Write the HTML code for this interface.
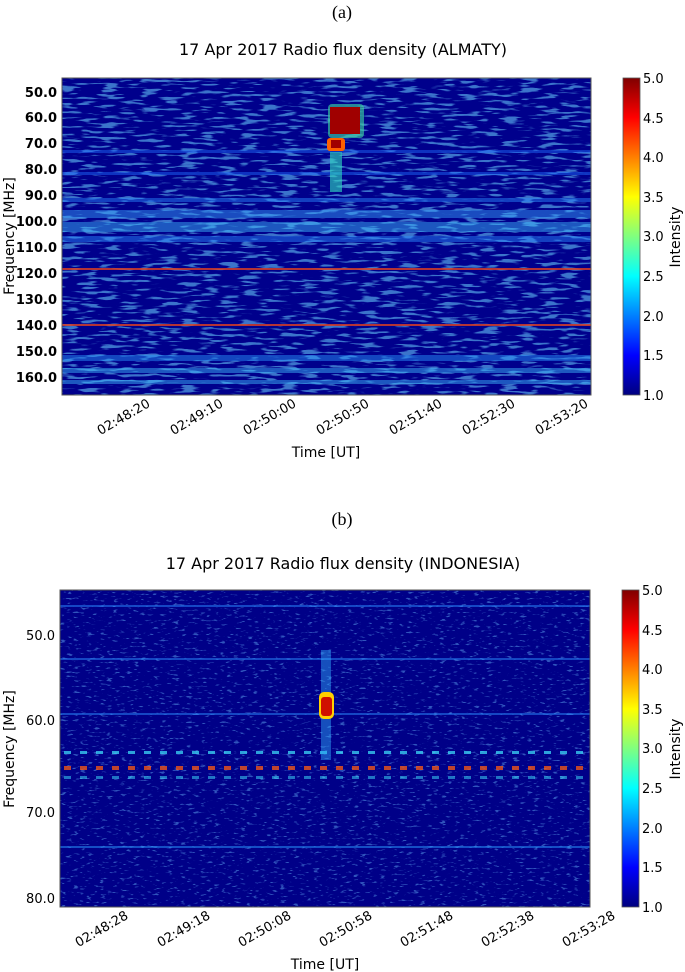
<!DOCTYPE html>
<html><head><meta charset="utf-8"><style>
body{margin:0;background:#fff;width:685px;height:972px;overflow:hidden}
svg{display:block}
text{font-family:"DejaVu Sans","Liberation Sans",sans-serif;fill:#000}
.s{font-family:"Liberation Serif",serif}
</style></head><body>
<svg width="685" height="972" viewBox="0 0 685 972">
<defs>
<linearGradient id="jet" x1="0" y1="1" x2="0" y2="0">
<stop offset="0" stop-color="#00007f"/><stop offset="0.125" stop-color="#0000ff"/>
<stop offset="0.375" stop-color="#00ffff"/><stop offset="0.625" stop-color="#ffff00"/>
<stop offset="0.875" stop-color="#ff0000"/><stop offset="1" stop-color="#800000"/>
</linearGradient>
<filter id="spa" x="0" y="0" width="100%" height="100%">
<feTurbulence type="fractalNoise" baseFrequency="0.05 0.35" numOctaves="2" seed="3"/>
<feColorMatrix type="matrix" values="0 0 0 0 0.15  0 0 0 0 0.65  0 0 0 0 1  9 0 0 0 -4.9"/>
</filter>
<filter id="spb" x="0" y="0" width="100%" height="100%">
<feTurbulence type="fractalNoise" baseFrequency="0.15 0.5" numOctaves="2" seed="7"/>
<feColorMatrix type="matrix" values="0 0 0 0 0.15  0 0 0 0 0.5  0 0 0 0 1  9 0 0 0 -5.6"/>
</filter>
<pattern id="dr" width="16" height="4" patternUnits="userSpaceOnUse">
<rect width="7" height="4" fill="#ff5a10"/>
</pattern>
<pattern id="dc" width="16" height="3" patternUnits="userSpaceOnUse">
<rect width="7" height="3" fill="#40e8ff"/>
</pattern>
</defs>

<!-- (a) -->
<text class="s" x="342" y="18" font-size="18" text-anchor="middle">(a)</text>
<text x="343" y="55" font-size="16" text-anchor="middle">17 Apr 2017 Radio flux density (ALMATY)</text>
<rect x="62" y="78" width="529" height="317" fill="#00008c"/>
<rect x="62" y="78" width="529" height="317" fill="#fff" filter="url(#spa)" opacity=".55"/>
<g opacity=".45">
<rect x="62" y="198" width="529" height="4" fill="#2a8cff"/>
<rect x="62" y="210" width="529" height="8" fill="#3aa8ff"/>
<rect x="62" y="222" width="529" height="10" fill="#40c0ff"/>
<rect x="62" y="236" width="529" height="6" fill="#2a8cff"/>
<rect x="62" y="150" width="529" height="3" fill="#1f6fff"/>
<rect x="62" y="172" width="529" height="3" fill="#1f6fff"/>
<rect x="62" y="355" width="529" height="6" fill="#2a9bff"/>
<rect x="62" y="368" width="529" height="5" fill="#40c0ff"/>
<rect x="62" y="380" width="529" height="4" fill="#40c0ff"/>
</g>
<rect x="62" y="268" width="529" height="2" fill="#e04020" opacity=".8"/>
<rect x="62" y="324" width="529" height="2" fill="#e04020" opacity=".8"/>
<rect x="328" y="104" width="36" height="34" rx="4" fill="#40e0a0" opacity=".6"/>
<rect x="330" y="107" width="30" height="27" fill="#a00000"/>
<rect x="327" y="138" width="18" height="13" rx="3" fill="#ff6000"/>
<rect x="331" y="140" width="10" height="8" fill="#a00000"/>
<rect x="330" y="152" width="12" height="40" fill="#30e0c0" opacity=".6"/>
<rect x="62" y="78" width="529" height="317" fill="none" stroke="#555" stroke-width="1"/>
<g font-size="13" font-weight="bold" text-anchor="end">
<text x="57" y="97">50.0</text><text x="57" y="122">60.0</text><text x="57" y="148">70.0</text>
<text x="57" y="174">80.0</text><text x="57" y="200">90.0</text><text x="57" y="226">100.0</text>
<text x="57" y="252">110.0</text><text x="57" y="278">120.0</text><text x="57" y="304">130.0</text>
<text x="57" y="330">140.0</text><text x="57" y="356">150.0</text><text x="57" y="382">160.0</text>
</g>
<text transform="translate(14,236) rotate(-90)" font-size="14" text-anchor="middle">Frequency [MHz]</text>
<g font-size="13" text-anchor="end">
<text transform="translate(151,406) rotate(-30)">02:48:20</text>
<text transform="translate(224,406) rotate(-30)">02:49:10</text>
<text transform="translate(297,406) rotate(-30)">02:50:00</text>
<text transform="translate(370,406) rotate(-30)">02:50:50</text>
<text transform="translate(443,406) rotate(-30)">02:51:40</text>
<text transform="translate(516,406) rotate(-30)">02:52:30</text>
<text transform="translate(589,406) rotate(-30)">02:53:20</text>
</g>
<text x="326" y="457" font-size="14" text-anchor="middle">Time [UT]</text>
<rect x="623" y="78" width="17" height="317" fill="url(#jet)" stroke="#555" stroke-width=".8"/>
<g font-size="13">
<text x="643" y="83">5.0</text><text x="643" y="123">4.5</text><text x="643" y="162">4.0</text>
<text x="643" y="202">3.5</text><text x="643" y="241">3.0</text><text x="643" y="281">2.5</text>
<text x="643" y="321">2.0</text><text x="643" y="360">1.5</text><text x="643" y="400">1.0</text>
</g>
<text transform="translate(680,237) rotate(-90)" font-size="14" text-anchor="middle">Intensity</text>

<!-- (b) -->
<text class="s" x="342" y="525" font-size="18" text-anchor="middle">(b)</text>
<text x="343" y="569" font-size="16" text-anchor="middle">17 Apr 2017 Radio flux density (INDONESIA)</text>
<rect x="60" y="590" width="530" height="317" fill="#000088"/>
<rect x="60" y="590" width="530" height="317" fill="#fff" filter="url(#spb)" opacity=".45"/>
<g opacity=".5">
<rect x="60" y="605" width="530" height="2" fill="#2a8cff"/>
<rect x="60" y="658" width="530" height="2" fill="#2a8cff"/>
<rect x="60" y="713" width="530" height="2" fill="#2a8cff"/>
<rect x="60" y="846" width="530" height="2" fill="#2a9bff"/>
</g>
<rect x="60" y="751" width="530" height="3" fill="url(#dc)" opacity=".7"/>
<rect x="60" y="766" width="530" height="4" fill="url(#dr)" opacity=".75"/>
<rect x="60" y="776" width="530" height="3" fill="url(#dc)" opacity=".5"/>
<rect x="321" y="650" width="10" height="110" fill="#30b0ff" opacity=".45"/>
<rect x="319" y="692" width="15" height="27" rx="5" fill="#ffd000"/>
<rect x="321" y="697" width="11" height="19" rx="3" fill="#d01000"/>
<rect x="60" y="590" width="530" height="317" fill="none" stroke="#555" stroke-width="1"/>
<g font-size="13" text-anchor="end">
<text x="55" y="640">50.0</text><text x="55" y="725">60.0</text>
<text x="55" y="817">70.0</text><text x="55" y="903">80.0</text>
</g>
<text transform="translate(14,749) rotate(-90)" font-size="14" text-anchor="middle">Frequency [MHz]</text>
<g font-size="13" text-anchor="end">
<text transform="translate(129,918) rotate(-30)">02:48:28</text>
<text transform="translate(211,918) rotate(-30)">02:49:18</text>
<text transform="translate(292,918) rotate(-30)">02:50:08</text>
<text transform="translate(373,918) rotate(-30)">02:50:58</text>
<text transform="translate(454,918) rotate(-30)">02:51:48</text>
<text transform="translate(535,918) rotate(-30)">02:52:38</text>
<text transform="translate(616,918) rotate(-30)">02:53:28</text>
</g>
<text x="325" y="969" font-size="14" text-anchor="middle">Time [UT]</text>
<rect x="622" y="590" width="17" height="317" fill="url(#jet)" stroke="#555" stroke-width=".8"/>
<g font-size="13">
<text x="642" y="595">5.0</text><text x="642" y="635">4.5</text><text x="642" y="674">4.0</text>
<text x="642" y="714">3.5</text><text x="642" y="753">3.0</text><text x="642" y="793">2.5</text>
<text x="642" y="833">2.0</text><text x="642" y="872">1.5</text><text x="642" y="912">1.0</text>
</g>
<text transform="translate(680,749) rotate(-90)" font-size="14" text-anchor="middle">Intensity</text>
</svg>
</body></html>
